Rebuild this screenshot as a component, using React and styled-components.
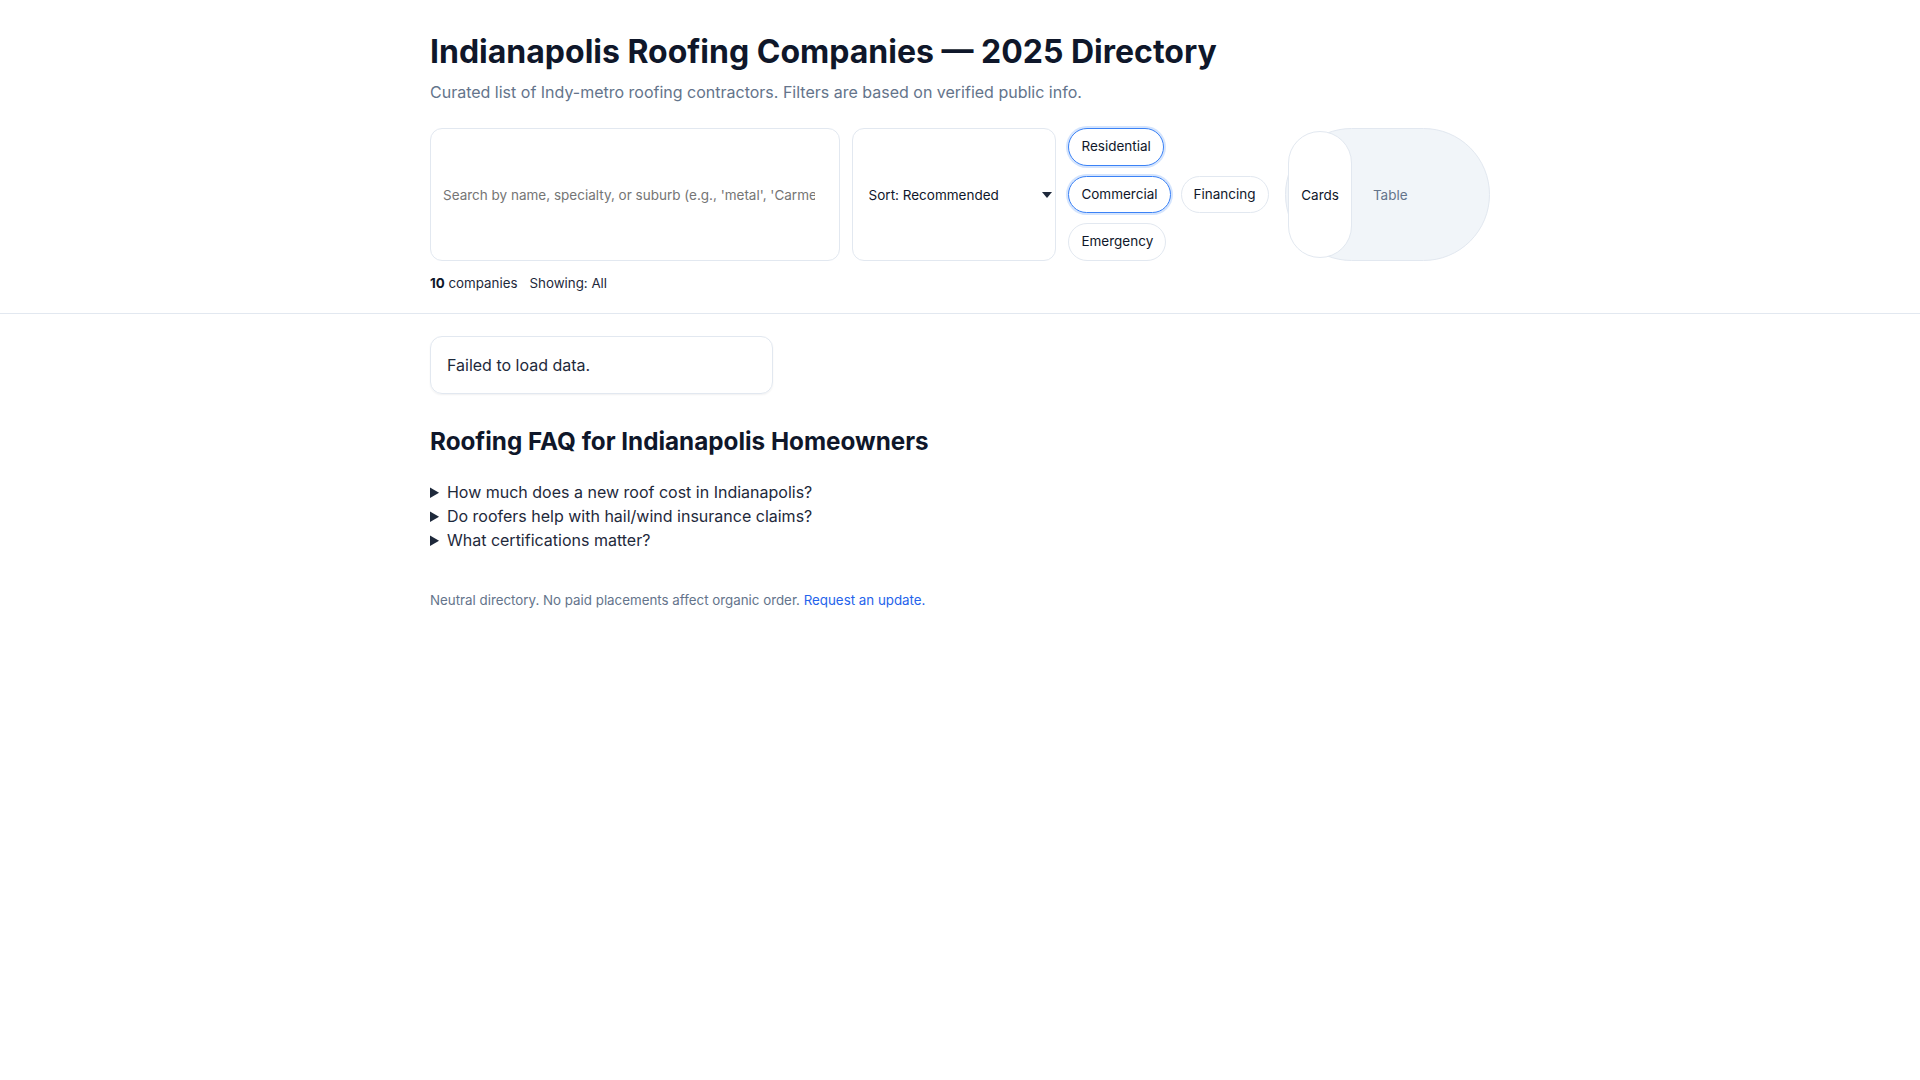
import React from 'react'
import styled, { createGlobalStyle } from 'styled-components'

const GlobalStyle = createGlobalStyle`
  * { box-sizing: border-box; }
  body {
    margin: 0;
    background: #ffffff;
    color: #0f172a;
    font-family: Inter, "Noto Sans", "Liberation Sans", sans-serif;
    font-size: 16px;
    line-height: 1.5;
  }
`

const Header = styled.header`
  background: #ffffff;
  border-bottom: 1px solid #e2e8f0;
  padding: 33px 0 20px;
`

const Wrap = styled.div`
  max-width: 1100px;
  margin: 0 auto;
  padding: 0 20px;
`

const Title = styled.h1`
  margin: 0;
  font-size: 32px;
  line-height: 1.2;
  font-weight: 700;
  color: #0f172a;
`

const Subtitle = styled.p`
  margin: 9px 0 0;
  font-size: 16px;
  line-height: 24px;
  color: #64748b;
`

const Controls = styled.div`
  margin-top: 24px;
  display: grid;
  grid-template-columns: 2fr 1fr 1fr 1fr;
  gap: 12px;
`

const Search = styled.input`
  border: 1px solid #e2e8f0;
  border-radius: 12px;
  padding: 0 24px 0 12px;
  font-family: inherit;
  font-size: 13.5px;
  color: #0f172a;
  background: #ffffff;
  outline: none;
  min-width: 0;
  &::placeholder { color: #757575; }
`

const SelectBox = styled.div`
  position: relative;
  display: flex;
  min-width: 0;
  svg {
    position: absolute;
    right: 4px;
    top: 50%;
    margin-top: -3px;
    pointer-events: none;
  }
`

const Select = styled.select`
  flex: 1;
  appearance: none;
  border: 1px solid #e2e8f0;
  border-radius: 12px;
  padding: 0 24px 0 16px;
  font-family: inherit;
  font-size: 13.5px;
  color: #0f172a;
  background: #ffffff;
  outline: none;
  min-width: 0;
`

const Chips = styled.div`
  display: flex;
  flex-wrap: wrap;
  align-content: flex-start;
  gap: 10px;
`

const Chip = styled.button`
  font-family: inherit;
  font-size: 13.5px;
  line-height: 19.5px;
  padding: 8px 12px;
  border-radius: 999px;
  background: #ffffff;
  color: #0f172a;
  cursor: pointer;
  border: 1px solid ${(p) => (p.$active ? '#3b82f6' : '#e2e8f0')};
  box-shadow: ${(p) => (p.$active ? '0 0 0 2px rgba(59, 130, 246, 0.22)' : 'none')};
`

const Toggle = styled.div`
  display: flex;
  gap: 8px;
  padding: 2px;
  border: 1px solid #e2e8f0;
  border-radius: 999px;
  background: #f1f5f9;
`

const ToggleButton = styled.button`
  font-family: inherit;
  font-size: 13.5px;
  padding: 0 12px;
  border-radius: 999px;
  cursor: pointer;
  border: 1px solid ${(p) => (p.$active ? '#e2e8f0' : 'transparent')};
  background: ${(p) => (p.$active ? '#ffffff' : 'transparent')};
  color: ${(p) => (p.$active ? '#0f172a' : '#64748b')};
`

const Meta = styled.div`
  margin-top: 12px;
  display: flex;
  gap: 12px;
  font-size: 13.33px;
  line-height: 20px;
  color: #1e293b;
  b { font-weight: 700; color: #0f172a; }
`

const Main = styled.main`
  padding-top: 22px;
`

const CardGrid = styled.div`
  display: grid;
  grid-template-columns: repeat(auto-fill, minmax(320px, 1fr));
  gap: 16px;
`

const Notice = styled.div`
  border: 1px solid #e2e8f0;
  border-radius: 12px;
  padding: 16px;
  font-size: 16px;
  line-height: 24px;
  color: #1e293b;
  box-shadow: 0 1px 2px rgba(15, 23, 42, 0.06);
`

const Faq = styled.section`
  margin-top: 32px;
  h2 {
    margin: 0 0 23px;
    font-size: 24.25px;
    line-height: 31px;
    font-weight: 700;
    color: #0f172a;
  }
`

const Question = styled.details`
  font-size: 16px;
  line-height: 24px;
  color: #1e293b;
  summary { cursor: pointer; }
`

const Footer = styled.footer`
  margin-top: 38px;
  font-size: 13.33px;
  line-height: 20px;
  color: #64748b;
  a { color: #2563eb; text-decoration: none; }
`

const filters = [
  { label: 'Residential', active: true },
  { label: 'Commercial', active: true },
  { label: 'Financing', active: false },
  { label: 'Emergency', active: false },
]

const questions = [
  'How much does a new roof cost in Indianapolis?',
  'Do roofers help with hail/wind insurance claims?',
  'What certifications matter?',
]

const App = () => {
  return (
    <>
      <GlobalStyle />
      <Header>
        <Wrap>
          <Title>Indianapolis Roofing Companies — 2025 Directory</Title>
          <Subtitle>
            Curated list of Indy-metro roofing contractors. Filters are based on verified public info.
          </Subtitle>
          <Controls>
            <Search placeholder="Search by name, specialty, or suburb (e.g., 'metal', 'Carmel')" />
            <SelectBox>
              <Select defaultValue="recommended">
                <option value="recommended">Sort: Recommended</option>
                <option value="rating">Sort: Rating</option>
                <option value="name">Sort: Name</option>
              </Select>
              <svg width="10" height="6" viewBox="0 0 10 6">
                <path d="M0 0 H10 L5 6 Z" fill="#1e293b" />
              </svg>
            </SelectBox>
            <Chips>
              {filters.map((f) => (
                <Chip key={f.label} $active={f.active}>
                  {f.label}
                </Chip>
              ))}
            </Chips>
            <Toggle>
              <ToggleButton $active>Cards</ToggleButton>
              <ToggleButton>Table</ToggleButton>
            </Toggle>
          </Controls>
          <Meta>
            <span>
              <b>10</b> companies
            </span>
            <span>Showing: All</span>
          </Meta>
        </Wrap>
      </Header>
      <Main>
        <Wrap>
          <CardGrid>
            <Notice>Failed to load data.</Notice>
          </CardGrid>
          <Faq>
            <h2>Roofing FAQ for Indianapolis Homeowners</h2>
            {questions.map((q) => (
              <Question key={q}>
                <summary>{q}</summary>
              </Question>
            ))}
          </Faq>
          <Footer>
            Neutral directory. No paid placements affect organic order. <a href="#">Request an update.</a>
          </Footer>
        </Wrap>
      </Main>
    </>
  )
}

export default App
